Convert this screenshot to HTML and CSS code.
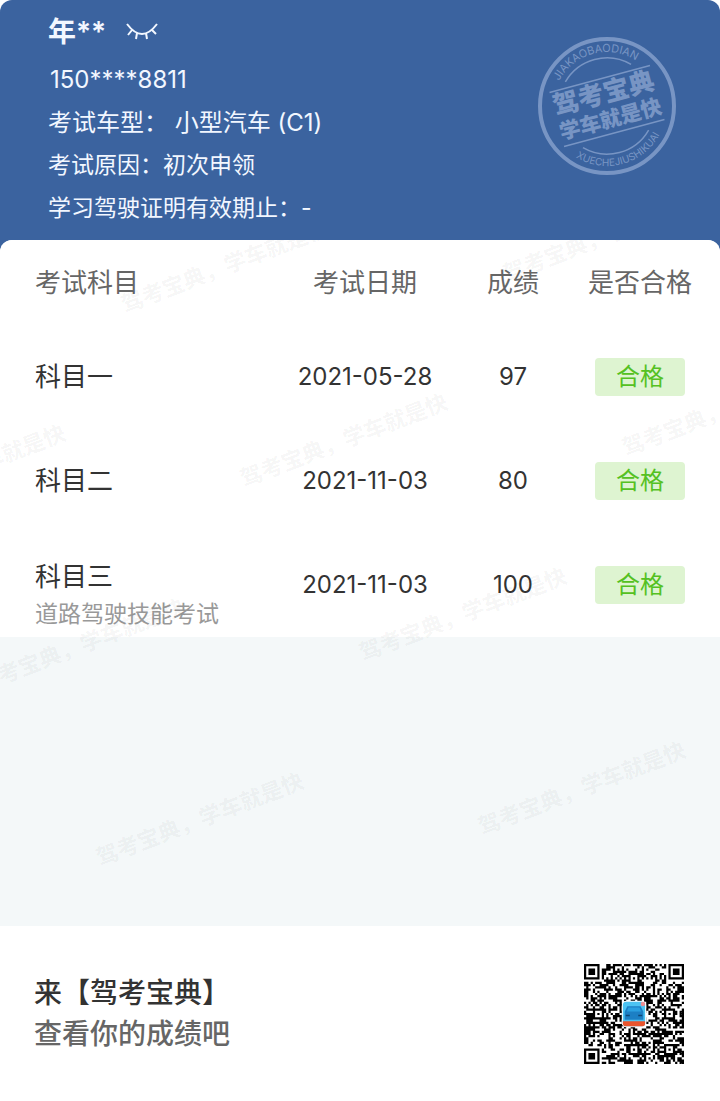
FILE: index.html
```html
<!DOCTYPE html>
<html lang="zh-CN">

<head>
    <meta charset="UTF-8">
    <meta name="viewport" content="width=device-width, initial-scale=1.0">
    <title>考试成绩</title>
    <link rel="stylesheet" href="styles.css">
</head>

<body>
    <header class="header">
        <div class="user">
            <div class="name-row">
                <h1 class="name">年**</h1>
                <button class="eye" type="button" aria-label="显示个人信息">
                    <svg width="32" height="18" viewBox="0 0 32 18">
                        <path d="M1 1Q16 21 31 1M6 7L2 12M11 10L10 16M20 10L21 16M26 7L30 11" />
                    </svg>
                </button>
            </div>
            <p class="info phone">150****8811</p>
            <p class="info car-type">考试车型： 小型汽车 (C1)</p>
            <p class="info">考试原因：初次申领</p>
            <p class="info">学习驾驶证明有效期止：-</p>
        </div>

        <svg class="stamp" width="140" height="140" viewBox="0 0 140 140">
            <defs>
                <path id="topArc" d="M16 70A54 54 0 0 1 124 70" />
                <path id="bottomArc" d="M10 70A60 60 0 0 0 130 70" />
            </defs>
            <circle class="stamp-ring" cx="70" cy="70" r="67" />
            <g transform="rotate(-15 70 70)">
                <path class="stamp-line" d="M18 42H122M18 98H122M36 36A48 48 0 0 1 104 36M36 104A48 48 0 0 0 104 104" />
                <text class="stamp-top"><textPath href="#topArc" startOffset="50%">JIAKAOBAODIAN</textPath></text>
                <text class="stamp-bottom"><textPath href="#bottomArc" startOffset="50%">XUECHEJIUSHIKUAI</textPath></text>
                <text class="stamp-name" x="70" y="66">驾考宝典</text>
                <text class="stamp-slogan" x="70" y="91">学车就是快</text>
            </g>
        </svg>
    </header>

    <main class="content">
        <table class="table">
            <thead>
                <tr>
                    <th class="col-subject">考试科目</th>
                    <th class="col-date">考试日期</th>
                    <th class="col-score">成绩</th>
                    <th class="col-result">是否合格</th>
                </tr>
            </thead>
            <tbody>
                <tr>
                    <td class="col-subject">科目一</td>
                    <td>2021-05-28</td>
                    <td>97</td>
                    <td><span class="badge">合格</span></td>
                </tr>
                <tr>
                    <td class="col-subject">科目二</td>
                    <td>2021-11-03</td>
                    <td>80</td>
                    <td><span class="badge">合格</span></td>
                </tr>
                <tr>
                    <td class="col-subject with-note">科目三<small class="note">道路驾驶技能考试</small></td>
                    <td>2021-11-03</td>
                    <td>100</td>
                    <td><span class="badge">合格</span></td>
                </tr>
            </tbody>
        </table>

        <svg class="watermark" aria-hidden="true">
            <text transform="translate(125 73) rotate(-21)">驾考宝典，学车就是快</text>
            <text transform="translate(507 42) rotate(-21)">驾考宝典，学车就是快</text>
            <text transform="translate(-138 278) rotate(-21)">驾考宝典，学车就是快</text>
            <text transform="translate(244 247) rotate(-21)">驾考宝典，学车就是快</text>
            <text transform="translate(626 216) rotate(-21)">驾考宝典，学车就是快</text>
            <text transform="translate(-19 452) rotate(-21)">驾考宝典，学车就是快</text>
            <text transform="translate(363 421) rotate(-21)">驾考宝典，学车就是快</text>
            <text transform="translate(100 626) rotate(-21)">驾考宝典，学车就是快</text>
            <text transform="translate(482 595) rotate(-21)">驾考宝典，学车就是快</text>
        </svg>
    </main>

    <footer class="footer">
        <div class="slogan">
            <p class="slogan-title">来【驾考宝典】</p>
            <p class="slogan-text">查看你的成绩吧</p>
        </div>
        <svg class="qrcode" width="100" height="100" viewBox="0 0 45 45" role="img" aria-label="二维码">
            <path id="modules" />
            <rect x="17" y="16.5" width="11" height="12" rx="2" fill="#fff" />
            <rect x="17.5" y="17" width="10" height="11" rx="1.5" fill="#4cc3f2" />
            <path d="M19.5 19h6l1.2 2.5v3.600h-8.400v-3.600z" fill="#1c7fc4" />
            <path d="M20 19.600h5l.7 1.800h-6.400z" fill="#2a9fe0" />
            <path d="M18.800 23.200h1.800M24.400 23.200h1.800" stroke="#0d4674" stroke-width=".7" />
            <path d="M17.500 25.800h10v1q0 1.200-1.200 1.200h-7.600q-1.200 0-1.200-1.200z" fill="#e9552e" />
            <circle cx="26.500" cy="18" r="1" fill="#ef8d92" />
        </svg>
    </footer>

    <script src="script.js"></script>
</body>

</html>
```
FILE: styles.css
```css
* {
    box-sizing: border-box;
}

body {
    margin: 0;
    min-height: 100vh;
    display: flex;
    flex-direction: column;
    background-color: white;
    color: #333;
    font-family: Inter, "Noto Sans CJK SC", sans-serif;
}

h1,
p {
    margin: 0;
}

.header {
    display: flex;
    justify-content: space-between;
    align-items: flex-start;
    height: 254px;
    padding: 8px 43px 0 48px;
    background-color: #3b639f;
    border-radius: 12px 12px 0 0;
    color: #f2f7ff;
}

.name-row {
    display: flex;
    align-items: center;
    gap: 20px;
    height: 48px;
    margin-bottom: 2px;
}

.name {
    font-size: 28px;
    font-weight: 600;
    line-height: 48px;
}

.eye {
    display: flex;
    padding: 0;
    border: 0;
    background: none;
}

.eye path {
    fill: none;
    stroke: #f2f7ff;
    stroke-width: 2;
}

.info {
    font-size: 23px;
    line-height: 43px;
}

.phone {
    padding-left: 2px;
}

.phone,
.car-type {
    font-size: 24px;
}

.stamp {
    flex: none;
    margin-top: 28px;
    fill: #7895c4;
}

.stamp-ring {
    fill: none;
    stroke: #7895c4;
    stroke-width: 4;
}

.stamp-line {
    fill: none;
    stroke: #7895c4;
    stroke-width: 1.5;
}

.stamp text {
    text-anchor: middle;
}

.stamp-top {
    font-size: 11px;
}

.stamp-bottom {
    font-size: 10px;
}

.stamp-name {
    font-size: 26px;
    font-weight: 900;
}

.stamp-slogan {
    font-size: 21px;
    font-weight: 900;
}

.content {
    position: relative;
    flex: 1;
    margin-top: -14px;
    border-radius: 12px 12px 0 0;
    background-color: #f4f8f9;
    overflow: hidden;
}

.table {
    width: 100%;
    table-layout: fixed;
    border-collapse: collapse;
    background-color: white;
    font-size: 24px;
    line-height: 38px;
}

.table th {
    height: 85px;
    padding: 0;
    color: #666;
    font-size: 26px;
    font-weight: 400;
}

.table td {
    height: 104px;
    padding: 0;
    text-align: center;
}

.table .col-subject {
    padding-left: 35px;
    font-size: 26px;
    text-align: left;
}

.col-date {
    width: 202px;
}

.col-score {
    width: 94px;
}

.col-result {
    width: 160px;
}

.table .with-note {
    padding-top: 24px;
    line-height: 40px;
    vertical-align: top;
}

.note {
    display: block;
    color: #999;
    font-size: 23px;
    line-height: 34px;
}

.badge {
    display: block;
    width: 90px;
    margin: 0 auto;
    border-radius: 4px;
    background-color: #def4d1;
    color: #55c122;
}

.watermark {
    position: absolute;
    top: 0;
    left: 0;
    width: 100%;
    height: 100%;
    fill: rgba(0, 0, 0, 0.05);
    font-family: "Noto Sans CJK SC", sans-serif;
    font-size: 22px;
    font-weight: 700;
    pointer-events: none;
}

.footer {
    display: flex;
    justify-content: space-between;
    align-items: center;
    height: 175px;
    padding: 0 36px 0 34px;
    background-color: white;
}

.slogan {
    font-size: 28px;
    font-weight: 500;
    line-height: 41px;
}

.slogan-text {
    color: #666;
}
```
FILE: script.js
```js
let modules = document.getElementById("modules");
let size = 45;
let seed = 97;

function nextBit() {
    seed = (seed * 16807) % 2147483647;
    return seed / 2147483647 < 0.54;
}

// square rings of the corner (radius 3) and alignment (radius 2) marks
function ring(x, y, cx, cy, radius) {
    let d = Math.max(Math.abs(x - cx), Math.abs(y - cy));
    if (radius == 3) {
        return d > 4 ? null : d != 2 && d != 4;
    }
    return d > 2 ? null : d != 1;
}

function isDark(x, y) {
    let marks = [
        [3, 3, 3], [41, 3, 3], [3, 41, 3],
        [22, 6, 2], [6, 22, 2], [38, 22, 2], [22, 38, 2], [38, 38, 2]
    ];
    let bit = nextBit();
    for (let [cx, cy, radius] of marks) {
        let dark = ring(x, y, cx, cy, radius);
        if (dark !== null) {
            return dark;
        }
    }
    if (x == 6 || y == 6) {
        return (x + y) % 2 == 0;
    }
    return bit;
}

let path = "";
for (let y = 0; y < size; y++) {
    for (let x = 0; x < size; x++) {
        if (isDark(x, y)) {
            path += `M${x} ${y}h1v1h-1z`;
        }
    }
}
modules.setAttribute("d", path);
```
